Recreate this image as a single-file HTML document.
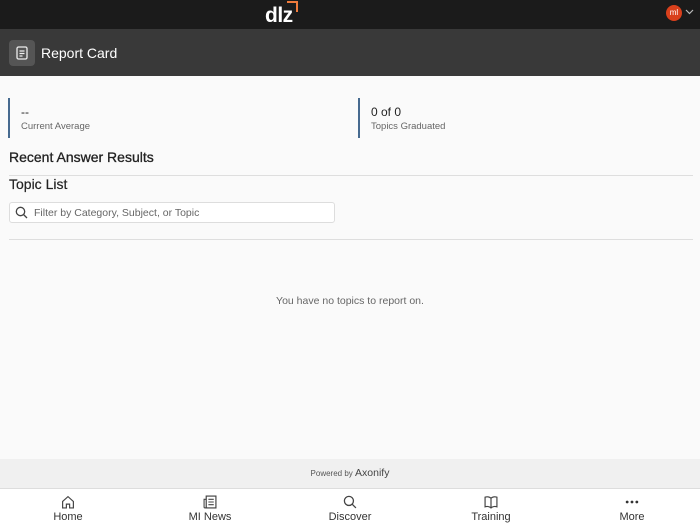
<!DOCTYPE html>
<html><head><style>
*{margin:0;padding:0;box-sizing:border-box}
body{width:700px;height:525px;overflow:hidden;background:#fafafa;font-family:"Liberation Sans",sans-serif;position:relative;color:#222}
.top{position:absolute;top:0;left:0;width:700px;height:29px;background:#1b1b1b}
.hdr{position:absolute;top:29px;left:0;width:700px;height:47px;background:#393939}
.abs{position:absolute}
.line{position:absolute;height:1px;background:#dedede}
.nav{position:absolute;top:488px;left:0;width:700px;height:37px;background:#fff;border-top:1px solid #ddd}
.ni{position:absolute;top:5px;width:80px;text-align:center;font-size:11px;color:#333}
.ni svg{display:block;margin:1px auto 2px}
</style></head><body>
<div class="top">
 <div class="abs" style="left:265px;top:4px;color:#fff;font-weight:bold;font-size:21px;letter-spacing:-0.5px">dlz</div>
 <div class="abs" style="left:287px;top:1px;width:11px;height:11px;border-top:2px solid #f07b3c;border-right:2px solid #f07b3c"></div>
 <div class="abs" style="left:666px;top:5px;width:16px;height:16px;border-radius:50%;background:#d9401c;color:#fff;font-size:8px;text-align:center;line-height:16px">ml</div>
 <svg class="abs" style="left:685px;top:9px" width="9" height="6" viewBox="0 0 9 6"><path d="M1 1l3.5 3.5L8 1" stroke="#bbb" fill="none" stroke-width="1.2"/></svg>
</div>
<div class="hdr">
 <div class="abs" style="left:9px;top:11px;width:26px;height:26px;border-radius:4px;background:#555"></div>
 <svg class="abs" style="left:15px;top:17px" width="14" height="14" viewBox="0 0 14 14"><rect x="2" y="1" width="10" height="12" rx="1.5" stroke="#eee" fill="none" stroke-width="1.3"/><path d="M4.5 5h5M4.5 7.5h5M4.5 10h3" stroke="#eee" stroke-width="1.2"/></svg>
 <div class="abs" style="left:41px;top:16px;color:#fff;font-size:14px">Report Card</div>
</div>
<div class="abs" style="left:8px;top:98px;width:2px;height:40px;background:#466a8f"></div>
<div class="abs" style="left:21px;top:105px;font-size:12px">--</div>
<div class="abs" style="left:21px;top:121px;font-size:9.5px;color:#666">Current Average</div>
<div class="abs" style="left:358px;top:98px;width:2px;height:40px;background:#466a8f"></div>
<div class="abs" style="left:371px;top:105px;font-size:12px">0 of 0</div>
<div class="abs" style="left:371px;top:121px;font-size:9.5px;color:#666">Topics Graduated</div>
<div class="abs" style="left:9px;top:149px;font-size:14px;-webkit-text-stroke:0.3px #222">Recent Answer Results</div>
<div class="line" style="left:9px;top:175px;width:684px"></div>
<div class="abs" style="left:9px;top:176px;font-size:14px;-webkit-text-stroke:0.2px #222">Topic List</div>
<div class="abs" style="left:9px;top:202px;width:326px;height:21px;background:#fff;border:1px solid #ddd;border-radius:3px"></div>
<svg class="abs" style="left:15px;top:206px" width="13" height="13" viewBox="0 0 13 13"><circle cx="5.5" cy="5.5" r="4.2" stroke="#444" fill="none" stroke-width="1.3"/><path d="M8.5 8.5l3.5 3.5" stroke="#444" stroke-width="1.3"/></svg>
<div class="abs" style="left:34px;top:207px;font-size:10.5px;color:#666">Filter by Category, Subject, or Topic</div>
<div class="line" style="left:9px;top:239px;width:684px"></div>
<div class="abs" style="left:0;top:295px;width:700px;text-align:center;font-size:10.5px;color:#666">You have no topics to report on.</div>
<div class="abs" style="left:0;top:459px;width:700px;height:29px;background:#f0f0f0"></div>
<div class="abs" style="left:0;top:467px;width:700px;text-align:center;font-size:8px;color:#555">Powered by <span style="font-size:10.5px;color:#444">Axonify</span></div>
<div class="nav">
 <div class="ni" style="left:28px"><svg width="14" height="14" viewBox="0 0 13 13"><path d="M1.5 6L6.5 1.5 11.5 6V12H8V8.5H5V12H1.5Z" stroke="#444" fill="none" stroke-width="1.1"/></svg>Home</div>
 <div class="ni" style="left:170px"><svg width="14" height="14" viewBox="0 0 13 13"><rect x="3" y="1" width="9" height="11" stroke="#444" fill="none" stroke-width="1.1"/><path d="M3 4H1v7a1 1 0 002 0M5 4h5M5 6.5h5M5 9h5" stroke="#444" fill="none" stroke-width="1"/></svg>MI News</div>
 <div class="ni" style="left:310px"><svg width="14" height="14" viewBox="0 0 13 13"><circle cx="5.5" cy="5.5" r="4.2" stroke="#444" fill="none" stroke-width="1.2"/><path d="M8.5 8.5l3.5 3.5" stroke="#444" stroke-width="1.2"/></svg>Discover</div>
 <div class="ni" style="left:451px"><svg width="14" height="14" viewBox="0 0 13 13"><path d="M6.5 3C5 1.5 2.5 1.5 1 2v9c1.5-.5 4-.5 5.5 1 1.5-1.5 4-1.5 5.5-1V2C10.5 1.5 8 1.5 6.5 3zM6.5 3v9" stroke="#444" fill="none" stroke-width="1.1"/></svg>Training</div>
 <div class="ni" style="left:592px"><svg width="14" height="14" viewBox="0 0 13 13"><circle cx="2" cy="6.5" r="1.3" fill="#333"/><circle cx="6.5" cy="6.5" r="1.3" fill="#333"/><circle cx="11" cy="6.5" r="1.3" fill="#333"/></svg>More</div>
</div>
</body></html>
